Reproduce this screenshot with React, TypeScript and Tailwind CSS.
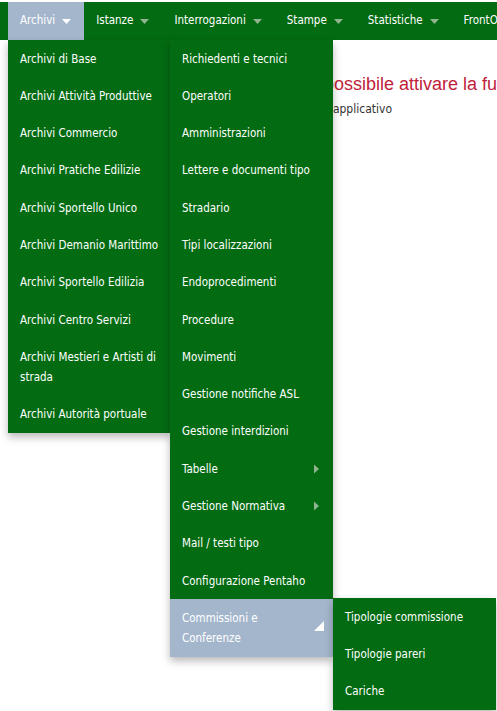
import React from 'react';

type Item = { label: string; sub?: boolean; active?: boolean };

const nav = ['Archivi', 'Istanze', 'Interrogazioni', 'Stampe', 'Statistiche', 'FrontOffice'];

const archivi: Item[] = [
  { label: 'Archivi di Base' },
  { label: 'Archivi Attività Produttive' },
  { label: 'Archivi Commercio' },
  { label: 'Archivi Pratiche Edilizie' },
  { label: 'Archivi Sportello Unico' },
  { label: 'Archivi Demanio Marittimo' },
  { label: 'Archivi Sportello Edilizia' },
  { label: 'Archivi Centro Servizi' },
  { label: 'Archivi Mestieri e Artisti di strada' },
  { label: 'Archivi Autorità portuale' },
];

const base: Item[] = [
  { label: 'Richiedenti e tecnici' },
  { label: 'Operatori' },
  { label: 'Amministrazioni' },
  { label: 'Lettere e documenti tipo' },
  { label: 'Stradario' },
  { label: 'Tipi localizzazioni' },
  { label: 'Endoprocedimenti' },
  { label: 'Procedure' },
  { label: 'Movimenti' },
  { label: 'Gestione notifiche ASL' },
  { label: 'Gestione interdizioni' },
  { label: 'Tabelle', sub: true },
  { label: 'Gestione Normativa', sub: true },
  { label: 'Mail / testi tipo' },
  { label: 'Configurazione Pentaho' },
  { label: 'Commissioni e Conferenze', sub: true, active: true },
];

const commissioni: Item[] = [
  { label: 'Tipologie commissione' },
  { label: 'Tipologie pareri' },
  { label: 'Cariche' },
];

function Caret({ white }: { white?: boolean }) {
  return (
    <svg width="9" height="5" viewBox="0 0 9 5" className="ml-[7px] shrink-0">
      <path d="M0 0 L9 0 L4.5 5 Z" fill={white ? '#ffffff' : '#8fb48f'} />
    </svg>
  );
}

function Menu({ items, className }: { items: Item[]; className: string }) {
  return (
    <ul className={`absolute w-[163px] bg-[#036b12] shadow-[0_4px_8px_rgba(0,0,0,0.28)] ${className}`}>
      {items.map((it) => (
        <li
          key={it.label}
          className={`relative flex items-center py-[8.65px] pl-3 leading-[20px] text-white ${
            it.sub ? 'pr-[32px]' : 'pr-2'
          } ${it.active ? 'bg-[#a4b6cc]' : ''}`}
        >
          <span>{it.label}</span>
          {it.sub && !it.active && (
            <svg width="5" height="9" viewBox="0 0 5 9" className="absolute right-[14px] top-1/2 -translate-y-1/2">
              <path d="M0 0 L5 4.5 L0 9 Z" fill="#8fb48f" />
            </svg>
          )}
          {it.active && (
            <svg width="10" height="10" viewBox="0 0 10 10" className="absolute right-[9px] top-[22px]">
              <path d="M10 0 L10 10 L0 10 Z" fill="#ffffff" />
            </svg>
          )}
        </li>
      ))}
    </ul>
  );
}

export default function App() {
  return (
    <div
      className="relative h-[711px] w-[497px] overflow-hidden bg-white pt-[2px] text-[11.5px]"
      style={{ fontFamily: '"DejaVu Sans Condensed", "DejaVu Sans", sans-serif' }}
    >
      <nav className="flex h-[38px] items-stretch whitespace-nowrap bg-[#036b12] pl-2 text-white">
        {nav.map((n, i) => (
          <div key={n} className={`flex items-center pl-3 pr-[13px] ${i === 0 ? 'bg-[#a4b6cc]' : ''}`}>
            <span>{n}</span>
            {i < 5 && <Caret white={i === 0} />}
          </div>
        ))}
      </nav>

      <div className="pt-[32px]">
        <div
          className="whitespace-nowrap pl-[304px] text-[18px] leading-[24px] text-[#c0223b]"
          style={{ fontFamily: '"Liberation Sans", Arial, sans-serif' }}
        >
          Impossibile attivare la funzionalità
        </div>
        <div className="mt-[4px] w-[392px] whitespace-nowrap text-right text-[12px] text-[#333333]">
          Contattare l'amministratore dell'applicativo
        </div>
      </div>

      <Menu items={archivi} className="left-[8px] top-[40px] w-[162px]" />
      <Menu items={base} className="left-[170px] top-[40px]" />
      <Menu items={commissioni} className="left-[333px] top-[598px]" />
    </div>
  );
}
